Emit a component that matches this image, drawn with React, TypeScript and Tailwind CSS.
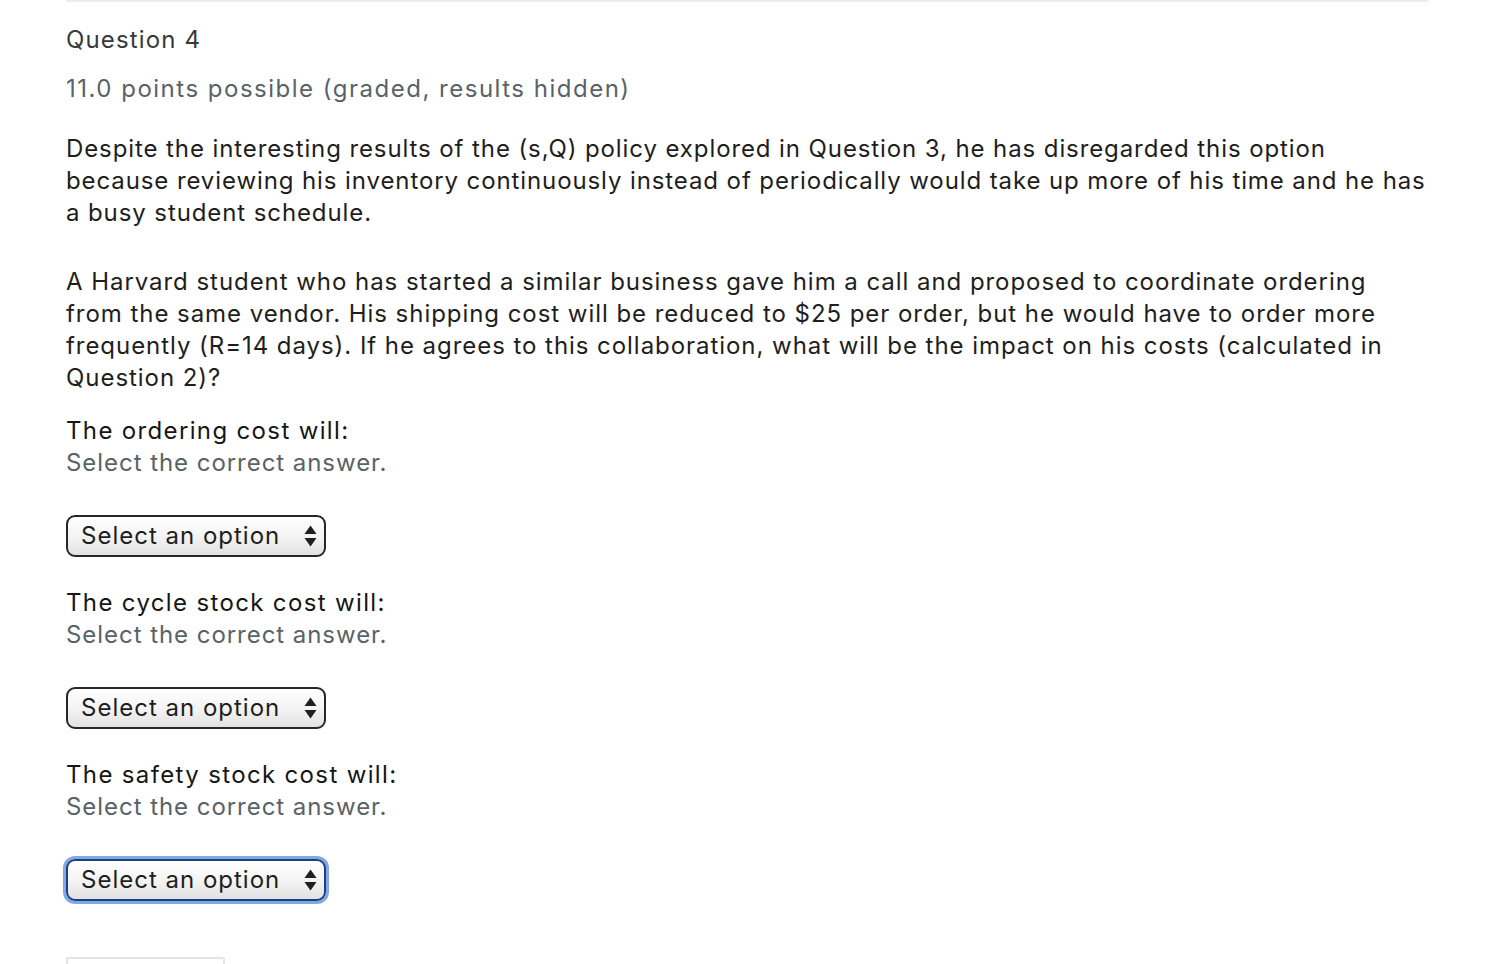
import React from "react"

function UpDown() {
  return (
    <svg width="13" height="24" viewBox="0 0 13 24" className="shrink-0">
      <path d="M6.5 1.5 L12.5 10 L0.5 10 Z" fill="#1f1f1f" />
      <path d="M0.5 14 L12.5 14 L6.5 22.5 Z" fill="#1f1f1f" />
    </svg>
  )
}

function FakeSelect({ focused = false }: { focused?: boolean }) {
  return (
    <div
      className={`flex h-[42px] w-[260px] items-center justify-between rounded-[9px] border-[2.5px] bg-gradient-to-b from-white via-[#f4f4f4] to-[#e2e2e2] pl-[13px] pr-[7px] text-[24px] tracking-[1px] text-[#1e1e1e] ${
        focused
          ? "border-[#1f3f7a] shadow-[0_0_0_3px_#7fa8ec]"
          : "border-[#262626]"
      }`}
    >
      <span>Select an option</span>
      <UpDown />
    </div>
  )
}

function Part({ label, focused }: { label: string; focused?: boolean }) {
  return (
    <div>
      <div className="tracking-[1.35px] text-[#161616]">{label}</div>
      <div className="text-[#5a6269]">Select the correct answer.</div>
      <div className="mt-[36px]">
        <FakeSelect focused={focused} />
      </div>
    </div>
  )
}

export default function App() {
  return (
    <div
      className="min-h-screen bg-white text-[24px] leading-[32px] tracking-[0.95px]"
      style={{ fontFamily: "Inter, 'Noto Sans', sans-serif" }}
    >
      <div className="ml-[66px] mr-[76px] border-t-2 border-[#ececec] pt-[22px]">
        <h3 className="font-normal text-[#363a3d] tracking-[1.15px]">Question 4</h3>
        <div className="mt-[17px] text-[#5a6269] tracking-[1.5px]">
          11.0 points possible (graded, results hidden)
        </div>

        <p className="mt-[28px] text-[#1e1e1e] tracking-[0.9px]">
          Despite the interesting results of the (s,Q) policy explored in Question 3, he has disregarded this
          option because reviewing his inventory continuously instead of periodically would take up more of his
          time and he has a busy student schedule.
        </p>

        <p className="mt-[37px] text-[#1e1e1e]">
          A Harvard student who has started a similar business gave him a call and proposed to coordinate
          ordering from the same vendor. His shipping cost will be reduced to $25 per order, but he would have to
          order more frequently (R=14 days). If he agrees to this collaboration, what will be the impact on his
          costs (calculated in Question 2)?
        </p>

        <div className="mt-[21px] flex flex-col gap-[30px]">
          <Part label="The ordering cost will:" />
          <Part label="The cycle stock cost will:" />
          <Part label="The safety stock cost will:" focused />
        </div>

        <div className="mt-[56px] h-[40px] w-[159px] rounded-t-[2px] border-2 border-[#e4e4e4]" />
      </div>
    </div>
  )
}
